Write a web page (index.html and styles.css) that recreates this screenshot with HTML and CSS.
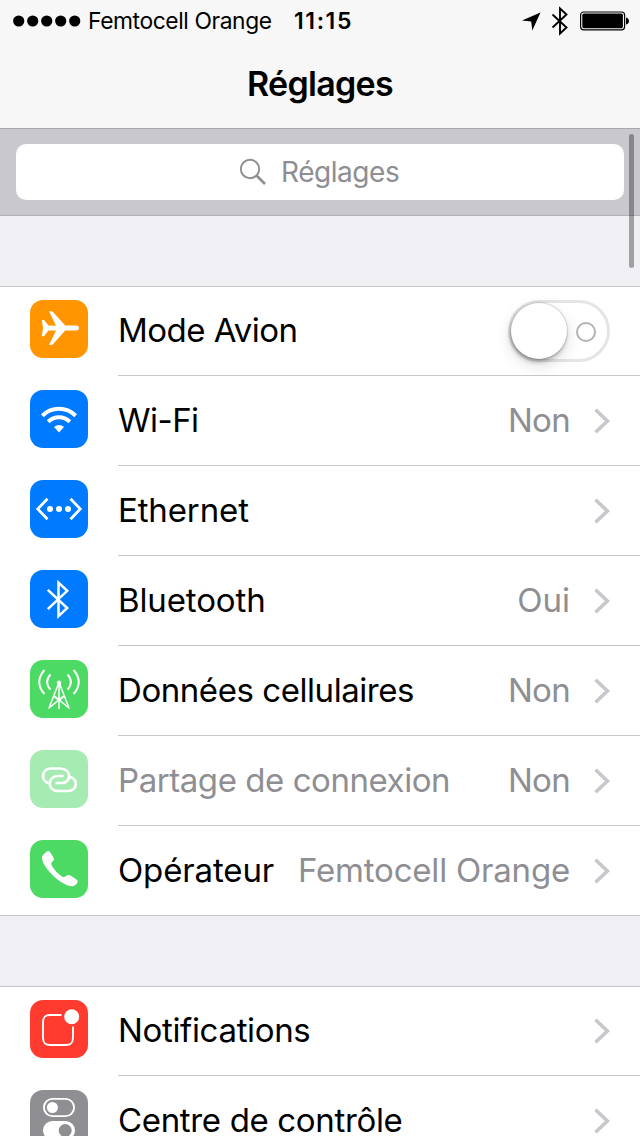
FILE: index.html
```html
<!DOCTYPE html>
<html lang="fr">
<head>
<meta charset="utf-8">
<title>Réglages</title>
<link rel="stylesheet" href="styles.css">
</head>
<body>
<svg class="defs" width="0" height="0"><symbol id="chevron" viewBox="0 0 16 26"><path d="M1.5 1.8 13.4 13 1.5 24.2" fill="none" stroke="#c7c7cc" stroke-width="3.6"/></symbol></svg>
<header class="top">
  <div class="status">
    <svg class="signal" width="68" height="12" viewBox="0 0 68 12"><circle cx="5.7" cy="6" r="5.6"/><circle cx="19.7" cy="6" r="5.6"/><circle cx="33.7" cy="6" r="5.6"/><circle cx="47.7" cy="6" r="5.6"/><circle cx="61.7" cy="6" r="5.6"/></svg>
    <span class="carrier">Femtocell Orange</span>
    <span class="time">11:15</span>
    <svg class="indicators" width="118" height="30" viewBox="0 0 118 30">
      <path d="M18.5 6.500 0 14.500 9.200 15.500 10.300 24.500Z"/>
      <path d="M30.500 8.500 44.500 21.500 38 27.500V2.500L44.500 8.500 30.500 21.500" fill="none" stroke="#000" stroke-width="1.9"/>
      <rect x="58.6" y="6" width="44" height="17.8" rx="3" fill="none" stroke="#000" stroke-width="1.2"/>
      <rect x="60.3" y="7.600" width="40.6" height="14.6" rx="1.6"/>
      <path d="M104 11.500c4 1 4 6 0 7Z"/>
    </svg>
  </div>
  <h1 class="title">Réglages</h1>
</header>
<div class="search">
  <div class="field">
    <svg width="28" height="28" viewBox="0 0 28 28" fill="none" stroke="#8e8e93"><circle cx="11" cy="11" r="9.2" stroke-width="1.9"/><path d="M17.5 17.5 26 26" stroke-width="2.6"/></svg>
    <span class="placeholder">Réglages</span>
  </div>
</div>
<div class="scrollbar"></div>
<main>
<section class="group">
  <div class="row">
    <svg class="icon orange" viewBox="0 0 58 58"><path fill="#fff" d="M11.800 20h2.200l4.500 5.600 7.500.1L19 11.200h3.300L35.200 25.600H46c4 0 4 5 0 5H35.200L22.300 45H19L26 30.500l-7.500.1L14 36.200H11.800l1.200-8.100Z"/></svg>
    <div class="cell"><span class="label avion">Mode Avion</span><span class="toggle"><span class="knob"></span><span class="ring"></span></span></div>
  </div>
  <div class="row">
    <svg class="icon blue" viewBox="0 0 58 58" fill="none" stroke="#fff" stroke-width="4"><path d="M12.4 25.700c9.5-9.2 23.7-9.2 33.2 0M18.2 31.700c6.2-5.8 15.4-5.8 21.6 0"/><path d="M24 37c3-2.8 7-2.8 10 0L29 42.5Z" fill="#fff" stroke="none"/></svg>
    <div class="cell"><span class="label wifi">Wi-Fi</span><span class="value non">Non</span><svg class="chevron"><use href="#chevron"/></svg></div>
  </div>
  <div class="row">
    <svg class="icon blue" viewBox="0 0 58 58"><path d="M17.5 18.7 7.7 29l9.8 10.3M40.5 18.7 50.3 29l-9.8 10.3" fill="none" stroke="#fff" stroke-width="2.7"/><g fill="#fff"><circle cx="20" cy="29" r="3"/><circle cx="29" cy="29" r="3"/><circle cx="38" cy="29" r="3"/></g></svg>
    <div class="cell"><span class="label ethernet">Ethernet</span><svg class="chevron"><use href="#chevron"/></svg></div>
  </div>
  <div class="row">
    <svg class="icon blue" viewBox="0 0 58 58"><path d="M17.8 19.8 37.200 38 28.500 46.200V12.600l8.700 8.200L17.8 39.2" fill="none" stroke="#fff" stroke-width="2.5"/></svg>
    <div class="cell"><span class="label bluetooth">Bluetooth</span><span class="value oui">Oui</span><svg class="chevron"><use href="#chevron"/></svg></div>
  </div>
  <div class="row">
    <svg class="icon green" viewBox="0 0 58 58" fill="none" stroke="#fff" stroke-width="2"><path d="M14.5 10c-7 7.500-7 16.500 0 24M20.500 14.500c-4.500 4.500-4.500 10.500 0 15M43.500 10c7 7.500 7 16.500 0 24M37.500 14.500c4.500 4.500 4.500 10.500 0 15"/><path d="M28.300 24 19 48M29.700 24 39 48M29 23v26M24.500 36 39.500 48.500M33.500 36 18.500 48.500M23.500 36 29 40.500 34.500 36" stroke-width="1.5"/><circle cx="29" cy="22.700" r="2.200" fill="#fff" stroke="none"/></svg>
    <div class="cell"><span class="label donnees">Données cellulaires</span><span class="value non">Non</span><svg class="chevron"><use href="#chevron"/></svg></div>
  </div>
  <div class="row">
    <svg class="icon pale" viewBox="0 0 58 58" fill="none" stroke="#fff" stroke-width="2.700"><path d="M18.500 33C10.500 31 11.500 18.500 21 18.500h9c12 0 12 14.500 1.500 14.500H25.500"/><path d="M40 27C48.500 29 47.500 41 38 41H28C17 41 17 26 28 26h5.500"/></svg>
    <div class="cell"><span class="label partage">Partage de connexion</span><span class="value non">Non</span><svg class="chevron"><use href="#chevron"/></svg></div>
  </div>
  <div class="row">
    <svg class="icon green" viewBox="0 0 58 58"><path fill="#fff" d="M13 15c2-2 4-4 5.500-4 1.500.3 4.500 5.500 5.500 8 .5 2-3 2.500-2.700 5C22 28 30 36 33 37c2.500.6 3.500-2.500 6-2 2.500 1 7 4 8.500 5.500 1 2-2 5.500-5 5.700C32 46.500 13.500 29 12 18.500c-.1-1.500.2-2.700 1-3.500Z"/></svg>
    <div class="cell"><span class="label operateur">Opérateur</span><span class="value femto">Femtocell Orange</span><svg class="chevron"><use href="#chevron"/></svg></div>
  </div>
</section>
<section class="group">
  <div class="row">
    <svg class="icon red" viewBox="0 0 58 58"><path d="M31.500 15H20.500c-5.500 0-7.500 2-7.500 7.500v15c0 5.500 2 7.500 7.500 7.500h15c5.500 0 7.500-2 7.500-7.500V26.500" fill="none" stroke="#fff" stroke-width="1.900"/><circle cx="41.700" cy="16.700" r="7.500" fill="#fff"/></svg>
    <div class="cell"><span class="label notifications">Notifications</span><svg class="chevron"><use href="#chevron"/></svg></div>
  </div>
  <div class="row">
    <svg class="icon gray" viewBox="0 0 58 58"><rect x="13.900" y="8.900" width="30.200" height="17.200" rx="8.600" fill="none" stroke="#fff" stroke-width="1.900"/><circle cx="22.400" cy="17.500" r="5.500" fill="#fff"/><rect x="13" y="31" width="32" height="19" rx="9.500" fill="#fff"/><circle cx="35.200" cy="40.500" r="6.500" fill="#8e8e93"/></svg>
    <div class="cell"><span class="label centre">Centre de contrôle</span><svg class="chevron"><use href="#chevron"/></svg></div>
  </div>
</section>
</main>
</body>
</html>
```
FILE: styles.css
```css
* { box-sizing: border-box; }
body { margin: 0; width: 640px; height: 1136px; overflow: hidden; background: #efeff4; color: #000; font-family: Inter, "Liberation Sans", sans-serif; white-space: nowrap; position: relative; }
.defs { display: block; }
svg { flex: none; }
.top { height: 129px; background: #f7f7f7; border-bottom: 1px solid #a7a7ac; }
.status { display: flex; align-items: center; height: 41px; padding-left: 13px; }
.carrier { width: 184px; margin-left: 7px; font-size: 22.8px; letter-spacing: -.4px; }
.time { width: 60px; margin-left: 22px; font-size: 23px; font-weight: 600; letter-spacing: 1.6px; }
.indicators { margin-left: 168px; }
.title { margin: 0; height: 87px; line-height: 86px; text-align: center; font-size: 34px; font-weight: 600; letter-spacing: -.7px; }
.search { height: 87px; padding: 15px 16px; background: #c9c8ce; border-bottom: 1px solid #b2b1b7; }
.field { display: flex; align-items: center; height: 56px; padding-left: 223px; background: #fff; border-radius: 10px; color: #8e8e93; }
.placeholder { margin-left: 14px; font-size: 28px; letter-spacing: -.45px; }
.scrollbar { position: absolute; left: 629px; top: 134px; width: 5px; height: 134px; border-radius: 3px; background: rgba(0,0,0,.33); }
.group { position: relative; margin-top: 70px; background: #fff; border-bottom: 1px solid #c8c7cc; }
.group::before { content: ""; position: absolute; left: 0; right: 0; top: 0; height: 1px; background: #c8c7cc; }
.row { display: flex; height: 90px; padding-left: 30px; }
.row:last-child { height: 89px; }
.icon { width: 58px; height: 58px; margin: 14px 30px 0 0; border-radius: 13px; }
.orange { background: #ff9500; }
.blue { background: #007aff; }
.green { background: #4cd964; }
.pale { background: #a6ecb2; }
.red { background: #ff3b30; }
.gray { background: #8e8e93; }
.cell { flex: 1; display: flex; align-items: center; padding-right: 30px; border-bottom: 1px solid #c8c7cc; }
.row:last-child .cell { border-bottom: 0; }
.label, .value { padding-bottom: 2px; font-size: 33px; line-height: 30px; }
.value { margin-left: auto; color: #8e8e93; }
.chevron { width: 16px; height: 26px; margin: 1px 0 0 24px; }
.label + .chevron { margin-left: auto; }
.avion, .wifi { letter-spacing: -.52px; }
.ethernet, .bluetooth, .operateur { letter-spacing: -.13px; }
.donnees, .partage { letter-spacing: -.44px; }
.notifications, .centre { letter-spacing: -.34px; }
.non { letter-spacing: -.7px; }
.femto { letter-spacing: -.2px; }
.partage { color: #8e8e93; }
.toggle { position: relative; width: 102px; height: 62px; margin: 1px 0 0 auto; border: 3px solid #e5e5e5; border-radius: 31px; }
.knob { position: absolute; left: 0; top: 0; width: 56px; height: 56px; border-radius: 50%; background: #fff; box-shadow: 0 0 1px 1px rgba(0,0,0,.12), -1px 3px 4px rgba(0,0,0,.25), 0 6px 16px rgba(0,0,0,.14); }
.ring { position: absolute; left: 65px; top: 19px; width: 20px; height: 20px; border: 2px solid #b3b3b3; border-radius: 50%; }
```
